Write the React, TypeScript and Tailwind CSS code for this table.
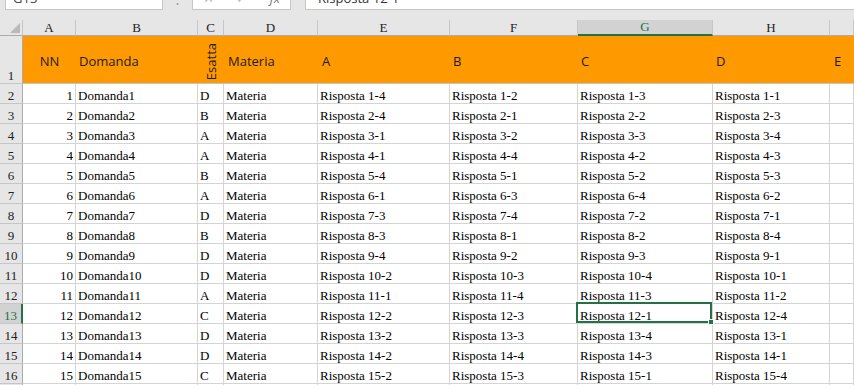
import React from 'react';

const COLS = 'grid grid-cols-[23px_53px_122px_26px_94px_132px_128px_135px_117px_1fr]';

type Row = { nn: number; ok: string; r: [string, string, string, string] };

const rows: Row[] = [
  { nn: 1, ok: 'D', r: ['1-4', '1-2', '1-3', '1-1'] },
  { nn: 2, ok: 'B', r: ['2-4', '2-1', '2-2', '2-3'] },
  { nn: 3, ok: 'A', r: ['3-1', '3-2', '3-3', '3-4'] },
  { nn: 4, ok: 'A', r: ['4-1', '4-4', '4-2', '4-3'] },
  { nn: 5, ok: 'B', r: ['5-4', '5-1', '5-2', '5-3'] },
  { nn: 6, ok: 'A', r: ['6-1', '6-3', '6-4', '6-2'] },
  { nn: 7, ok: 'D', r: ['7-3', '7-4', '7-2', '7-1'] },
  { nn: 8, ok: 'B', r: ['8-3', '8-1', '8-2', '8-4'] },
  { nn: 9, ok: 'D', r: ['9-4', '9-2', '9-3', '9-1'] },
  { nn: 10, ok: 'D', r: ['10-2', '10-3', '10-4', '10-1'] },
  { nn: 11, ok: 'A', r: ['11-1', '11-4', '11-3', '11-2'] },
  { nn: 12, ok: 'C', r: ['12-2', '12-3', '12-1', '12-4'] },
  { nn: 13, ok: 'D', r: ['13-2', '13-3', '13-4', '13-1'] },
  { nn: 14, ok: 'D', r: ['14-2', '14-4', '14-3', '14-1'] },
  { nn: 15, ok: 'C', r: ['15-2', '15-3', '15-1', '15-4'] },
];

const letters = ['A', 'B', 'C', 'D', 'E', 'F', 'G', 'H', ''];

function TopBar() {
  return (
    <div className="h-[20px] bg-[#e6e6e6] font-['Open_Sans',sans-serif] text-[13px] leading-[16px]">
      <div className="flex h-[10px]">
        <div className="ml-[5px] w-[158px] h-full overflow-hidden bg-white border-x border-b border-[#c6c6c6]">
          <span className="block -mt-[10px] pl-[7px] text-[#444]">G13</span>
        </div>
        <div className="w-[29px] h-full overflow-hidden flex justify-center">
          <span className="block -mt-[10px] text-[#999]">⋮</span>
        </div>
        <div className="w-[99px] h-full overflow-hidden bg-white border-x border-b border-[#c6c6c6] flex justify-between px-[10px] text-[#bbb]">
          <span className="block -mt-[10px]">✕</span>
          <span className="block -mt-[10px]">✓</span>
          <span className="block -mt-[10px] italic text-[#777]">fx</span>
        </div>
        <div className="ml-[14px] flex-1 h-full overflow-hidden bg-white border-l border-b border-[#c6c6c6]">
          <span className="block -mt-[10px] pl-[12px] text-[#333]">Risposta 12-1</span>
        </div>
      </div>
    </div>
  );
}

function DataCell({
  children,
  align = 'left',
  selected = false,
}: {
  children?: React.ReactNode;
  align?: 'left' | 'right';
  selected?: boolean;
}) {
  return (
    <div
      className={
        align === 'right'
          ? 'relative h-[20px] border-r border-b border-[#d4d4d4] flex items-end justify-end pr-[2px] whitespace-nowrap overflow-hidden'
          : 'relative h-[20px] border-r border-b border-[#d4d4d4] flex items-end pl-[2px] whitespace-nowrap'
      }
    >
      {children}
      {selected && (
        <div className="absolute -left-[2px] -top-[2px] right-0 bottom-0 border-2 border-[#217346] z-10">
          <div className="absolute -right-[4px] -bottom-[4px] w-[6px] h-[6px] bg-[#217346] border border-white" />
        </div>
      )}
    </div>
  );
}

export default function App() {
  return (
    <div className="w-[854px] h-[385px] overflow-hidden bg-white text-black">
      <TopBar />
      <div className={`${COLS} font-['Liberation_Serif',serif] text-[13px] leading-[15px]`}>
        {/* column headers */}
        <div className="relative h-[16px] bg-[#e6e6e6] border-r border-b border-r-[#c6c6c6] border-b-[#ababab]">
          <svg className="absolute right-[2px] bottom-[2px]" width="10" height="10" viewBox="0 0 10 10">
            <polygon points="10,0 10,10 0,10" fill="#b9b9b9" />
          </svg>
        </div>
        {letters.map((l, i) =>
          l === 'G' ? (
            <div
              key={i}
              className="h-[16px] bg-[#d2d2d2] border-r border-r-[#c6c6c6] border-b-2 border-b-[#217346] flex items-end justify-center text-[#217346] leading-[14px]"
            >
              {l}
            </div>
          ) : (
            <div
              key={i}
              className="h-[16px] bg-[#e6e6e6] border-r border-b border-r-[#c6c6c6] border-b-[#ababab] flex items-end justify-center text-[#222]"
            >
              {l}
            </div>
          )
        )}

        {/* row 1: orange header */}
        <div className="h-[48px] bg-[#e6e6e6] border-r border-b border-r-[#ababab] border-b-[#c6c6c6] flex items-end justify-center text-[#222]">
          1
        </div>
        <div className="col-span-9 h-[48px] bg-[#ff9900] border-b border-[#c4c4c4] grid grid-cols-[53px_122px_26px_94px_132px_128px_135px_117px_1fr] font-['Open_Sans',sans-serif] text-[13px] leading-[18px] text-[#1c1c1c]">
          <div className="flex items-center justify-center pt-[2px]">NN</div>
          <div className="flex items-center pl-[3px] pt-[2px]">Domanda</div>
          <div className="flex items-end justify-center pb-[3px]">
            <span className="[writing-mode:vertical-rl] rotate-180 leading-[13px]">Esatta</span>
          </div>
          <div className="flex items-center pl-[4px] pt-[2px]">Materia</div>
          <div className="flex items-center pl-[4px] pt-[2px]">A</div>
          <div className="flex items-center pl-[3px] pt-[2px]">B</div>
          <div className="flex items-center pl-[3px] pt-[2px]">C</div>
          <div className="flex items-center pl-[3px] pt-[2px]">D</div>
          <div className="flex items-center pl-[4px] pt-[2px]">E</div>
        </div>

        {/* data rows */}
        {rows.map((row, idx) => {
          const rowNum = idx + 2;
          const active = rowNum === 13;
          return (
            <React.Fragment key={row.nn}>
              {active ? (
                <div className="h-[20px] bg-[#d2d2d2] border-r-2 border-b border-r-[#217346] border-b-[#c6c6c6] flex items-end justify-center text-[#217346]">
                  {rowNum}
                </div>
              ) : (
                <div className="h-[20px] bg-[#e6e6e6] border-r border-b border-r-[#ababab] border-b-[#c6c6c6] flex items-end justify-center text-[#222]">
                  {rowNum}
                </div>
              )}
              <DataCell align="right">{row.nn}</DataCell>
              <DataCell>Domanda{row.nn}</DataCell>
              <DataCell>{row.ok}</DataCell>
              <DataCell>Materia</DataCell>
              <DataCell>Risposta {row.r[0]}</DataCell>
              <DataCell>Risposta {row.r[1]}</DataCell>
              <DataCell selected={active}>Risposta {row.r[2]}</DataCell>
              <DataCell>Risposta {row.r[3]}</DataCell>
              <DataCell />
            </React.Fragment>
          );
        })}

        {/* partial row 17 */}
        <div className="h-[20px] bg-[#e6e6e6] border-r border-r-[#ababab] flex items-end justify-center text-[#222]">17</div>
        {letters.map((_, i) => (
          <div key={i} className="h-[20px] border-r border-[#d4d4d4]" />
        ))}
      </div>
    </div>
  );
}
